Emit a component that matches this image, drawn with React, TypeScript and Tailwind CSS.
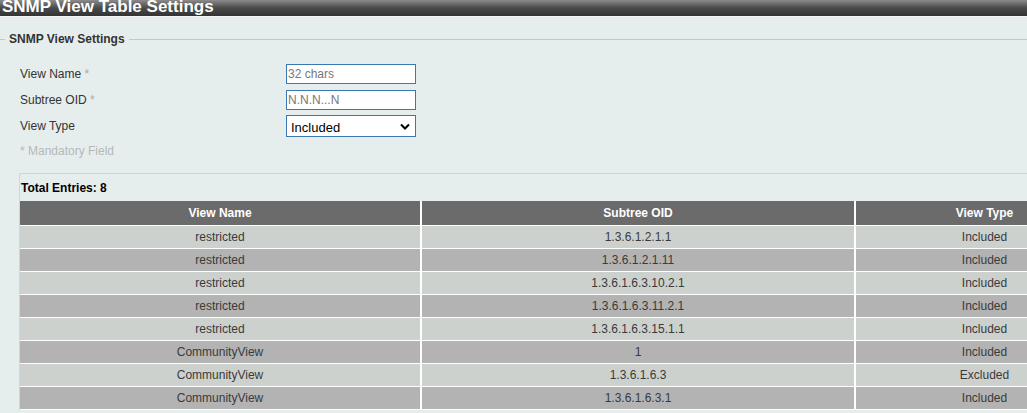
const rows = [
  { name: "restricted", oid: "1.3.6.1.2.1.1", type: "Included" },
  { name: "restricted", oid: "1.3.6.1.2.1.11", type: "Included" },
  { name: "restricted", oid: "1.3.6.1.6.3.10.2.1", type: "Included" },
  { name: "restricted", oid: "1.3.6.1.6.3.11.2.1", type: "Included" },
  { name: "restricted", oid: "1.3.6.1.6.3.15.1.1", type: "Included" },
  { name: "CommunityView", oid: "1", type: "Included" },
  { name: "CommunityView", oid: "1.3.6.1.6.3", type: "Excluded" },
  { name: "CommunityView", oid: "1.3.6.1.6.3.1", type: "Included" },
];

function FormRow({ label, required, children }: { label: string; required?: boolean; children: React.ReactNode }) {
  return (
    <div className="flex h-[26px] items-center">
      <div className="w-[266px] text-[12px] text-[#333]">
        {label}
        {required && <span className="text-[#aaa]"> *</span>}
      </div>
      {children}
    </div>
  );
}

export default function App() {
  return (
    <div
      className="h-[413px] w-[1027px] overflow-hidden bg-[#e6eeed]"
      style={{ fontFamily: '"Liberation Sans", Arial, sans-serif' }}
    >
      <div className="h-[17px] overflow-hidden border-b border-[#f4f4f4] bg-gradient-to-b from-[#8c8c8c] via-[#4a4a4a] to-[#333] pl-[2px]">
        <div className="-mt-[4px] text-[17px] font-bold leading-[22px] text-white">SNMP View Table Settings</div>
      </div>

      <div className="mt-[13px] flex items-center">
        <div className="h-px w-[5px] bg-[#b8ccc8]" />
        <div className="px-[4px] text-[12px] font-bold text-[#333]">SNMP View Settings</div>
        <div className="h-px flex-1 bg-[#b8ccc8]" />
      </div>

      <div className="mt-[13px] pl-[20px]">
        <FormRow label="View Name" required>
          <input
            placeholder="32 chars"
            className="h-[20px] w-[130px] border border-[#3a78b4] bg-white px-[1px] text-[12px] outline-none placeholder:text-[#777]"
          />
        </FormRow>
        <FormRow label="Subtree OID" required>
          <input
            placeholder="N.N.N...N"
            className="h-[20px] w-[130px] border border-[#3a78b4] bg-white px-[1px] text-[12px] outline-none placeholder:text-[#777]"
          />
        </FormRow>
        <FormRow label="View Type">
          <div className="relative h-[22px] w-[130px] border border-[#3a78b4] bg-white">
            <span className="absolute left-[4px] top-[2px] text-[13px] text-black">Included</span>
            <svg className="absolute right-[5px] top-[7px]" width="10" height="7" viewBox="0 0 10 7">
              <path d="M1 1.5 L5 5.5 L9 1.5" fill="none" stroke="#000" strokeWidth="2" />
            </svg>
          </div>
        </FormRow>
        <div className="flex h-[24px] items-center text-[12px] text-[#b4b8b8]">* Mandatory Field</div>
      </div>

      <div className="ml-[19px] mt-[10px] border-l border-t border-[#cfd6d5]">
        <div className="flex h-[27px] items-center pl-[1px] text-[12px] font-bold text-black">Total Entries: 8</div>
        <table className="w-[1093px] table-fixed border-collapse text-[12px]">
          <colgroup>
            <col className="w-[401px]" />
            <col className="w-[434px]" />
            <col className="w-[258px]" />
          </colgroup>
          <thead>
            <tr className="h-[24px] bg-[#6b6b6b] text-white">
              <th className="border-r-2 border-b border-white font-bold">View Name</th>
              <th className="border-r-2 border-b border-white font-bold">Subtree OID</th>
              <th className="border-b border-white font-bold">View Type</th>
            </tr>
          </thead>
          <tbody>
            {rows.map((r, i) => (
              <tr key={i} className={`h-[23px] text-[#3a3a3a] ${i % 2 === 0 ? "bg-[#cdd1cd]" : "bg-[#b3b3b3]"}`}>
                <td className="border-r-2 border-b border-white text-center">{r.name}</td>
                <td className="border-r-2 border-b border-white text-center">{r.oid}</td>
                <td className="border-b border-white text-center">{r.type}</td>
              </tr>
            ))}
          </tbody>
        </table>
      </div>
    </div>
  );
}
